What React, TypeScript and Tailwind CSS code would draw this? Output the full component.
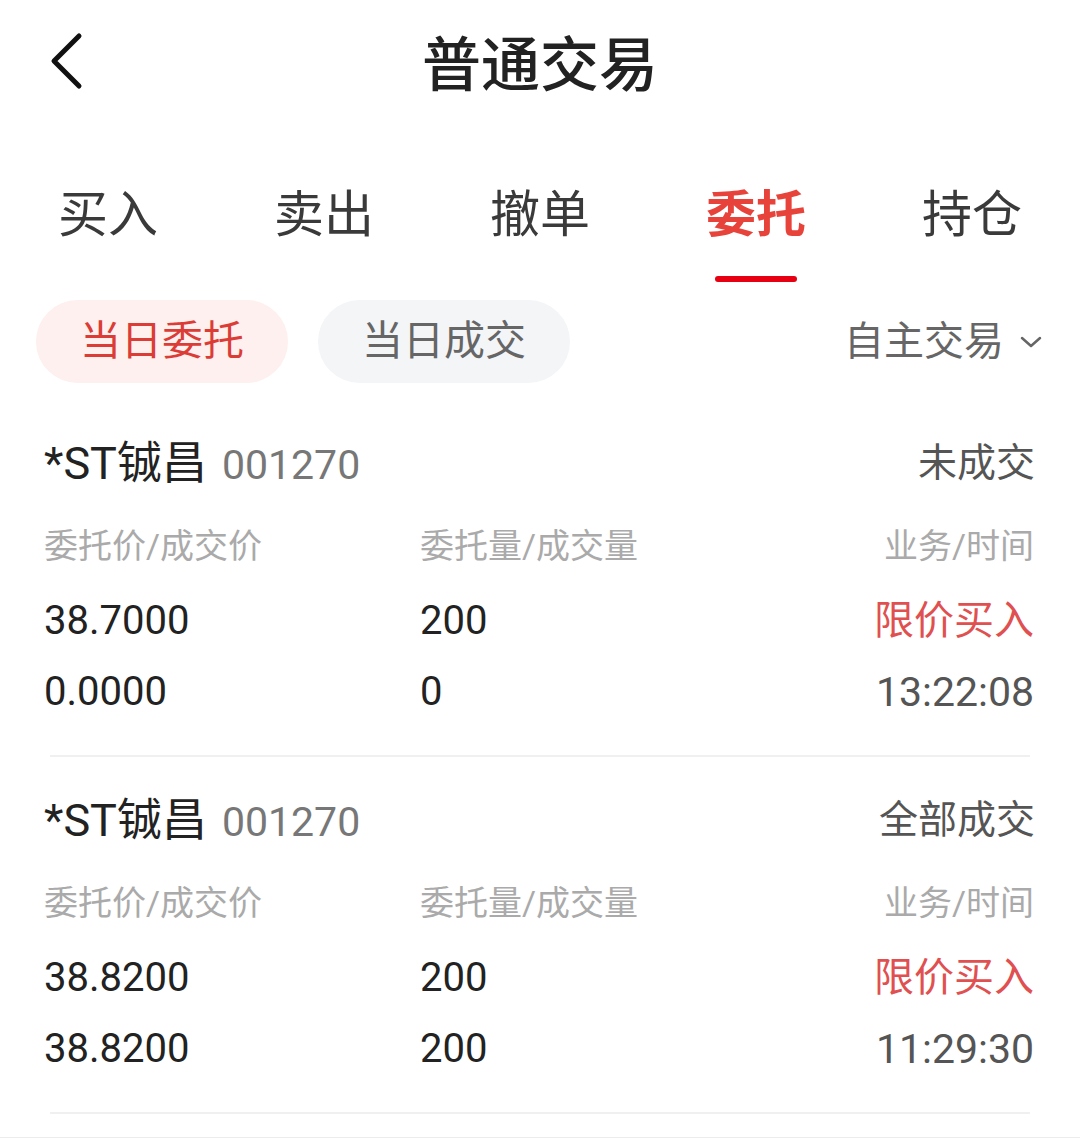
import { useState } from 'react';

interface Order {
  name: string;
  code: string;
  status: string;
  orderPrice: string;
  dealPrice: string;
  orderQty: string;
  dealQty: string;
  kind: string;
  time: string;
}

const tabs = ['买入', '卖出', '撤单', '委托', '持仓'];

const orders: Order[] = [
  {
    name: '*ST铖昌',
    code: '001270',
    status: '未成交',
    orderPrice: '38.7000',
    dealPrice: '0.0000',
    orderQty: '200',
    dealQty: '0',
    kind: '限价买入',
    time: '13:22:08',
  },
  {
    name: '*ST铖昌',
    code: '001270',
    status: '全部成交',
    orderPrice: '38.8200',
    dealPrice: '38.8200',
    orderQty: '200',
    dealQty: '200',
    kind: '限价买入',
    time: '11:29:30',
  },
];

function OrderCard({ order }: { order: Order }) {
  return (
    <div className="pt-[27px]">
      {/* Stock + status */}
      <div className="h-[72px] pl-[44px] pr-[45px] flex items-center justify-between">
        <div className="flex items-baseline">
          <span className="text-[45px] leading-none text-[#222]">{order.name}</span>
          <span className="ml-[15px] text-[41px] leading-none text-[#777]">{order.code}</span>
        </div>
        <span className="text-[39px] leading-none text-[#555]">{order.status}</span>
      </div>

      <div className="mt-[11px] pl-[44px] pr-[46px] grid grid-cols-[376px_1fr_auto] auto-rows-[72px] items-center">
        <span className="text-[34px] leading-none text-[#aaa]">委托价/成交价</span>
        <span className="text-[34px] leading-none text-[#aaa]">委托量/成交量</span>
        <span className="text-[34px] leading-none text-[#aaa] text-right">业务/时间</span>

        <span className="pt-[5px] text-[40px] leading-none text-[#222]">{order.orderPrice}</span>
        <span className="pt-[5px] text-[40px] leading-none text-[#222]">{order.orderQty}</span>
        <span className="pt-[5px] text-[40px] leading-none text-[#e05050] text-right">{order.kind}</span>

        <span className="pt-[4px] text-[40px] leading-none text-[#222]">{order.dealPrice}</span>
        <span className="pt-[4px] text-[40px] leading-none text-[#222]">{order.dealQty}</span>
        <span className="pt-[4px] text-[41px] leading-none text-[#555] text-right">{order.time}</span>
      </div>

      <div className="mt-[29px] mx-[50px] h-[2px] bg-[#f0f0f0]" />
    </div>
  );
}

export default function App() {
  const [activeTab, setActiveTab] = useState(3);
  const [activeFilter, setActiveFilter] = useState(0);

  return (
    <div className="w-[1080px] h-[1138px] overflow-hidden bg-white font-['Roboto','Noto_Sans_CJK_SC',sans-serif]">
      {/* Header */}
      <div className="h-[130px] grid grid-cols-[1fr_auto_1fr] items-center">
        <button className="justify-self-start ml-[48px] mt-[-6px]">
          <svg width="36" height="60" viewBox="0 0 36 60" fill="none">
            <polyline
              points="31,4 6,29 31,54"
              stroke="#111"
              strokeWidth="5"
              strokeLinecap="round"
              strokeLinejoin="round"
            />
          </svg>
        </button>
        <h1 className="text-[59px] leading-none font-medium text-[#222]">普通交易</h1>
        <div />
      </div>

      {/* Tabs */}
      <div className="grid grid-cols-5 pt-[60px]">
        {tabs.map((tab, i) => (
          <button key={tab} onClick={() => setActiveTab(i)} className="flex flex-col items-center">
            <span
              className={
                i === activeTab
                  ? 'text-[50px] leading-[50px] font-bold text-[#e8433a]'
                  : 'text-[50px] leading-[50px] text-[#3a3a3a]'
              }
            >
              {tab}
            </span>
            <span
              className={
                i === activeTab
                  ? 'mt-[36px] h-[6px] w-[82px] rounded-full bg-[#e60012]'
                  : 'mt-[36px] h-[6px] w-[82px] bg-transparent'
              }
            />
          </button>
        ))}
      </div>

      {/* Filters */}
      <div className="mt-[18px] mb-[17px] pl-[36px] pr-[38px] flex items-center">
        {['当日委托', '当日成交'].map((label, i) => (
          <button
            key={label}
            onClick={() => setActiveFilter(i)}
            className={
              i === activeFilter
                ? 'w-[252px] h-[83px] mr-[30px] rounded-full bg-[#fdf0ee] text-[41px] leading-none text-[#dc3c36]'
                : 'w-[252px] h-[83px] mr-[30px] rounded-full bg-[#f4f5f7] text-[41px] leading-none text-[#666]'
            }
          >
            {label}
          </button>
        ))}
        <div className="ml-auto flex items-center text-[40px] leading-none text-[#666]">
          自主交易
          <svg className="ml-[16px]" width="22" height="14" viewBox="0 0 22 14" fill="none">
            <polyline
              points="2,3 11,11 20,3"
              stroke="#666"
              strokeWidth="2.5"
              strokeLinecap="round"
              strokeLinejoin="round"
            />
          </svg>
        </div>
      </div>

      {/* Orders */}
      {orders.map((order, i) => (
        <OrderCard key={i} order={order} />
      ))}

      <div className="mt-[23px] h-[6px] bg-[#ececec]" />
    </div>
  );
}
